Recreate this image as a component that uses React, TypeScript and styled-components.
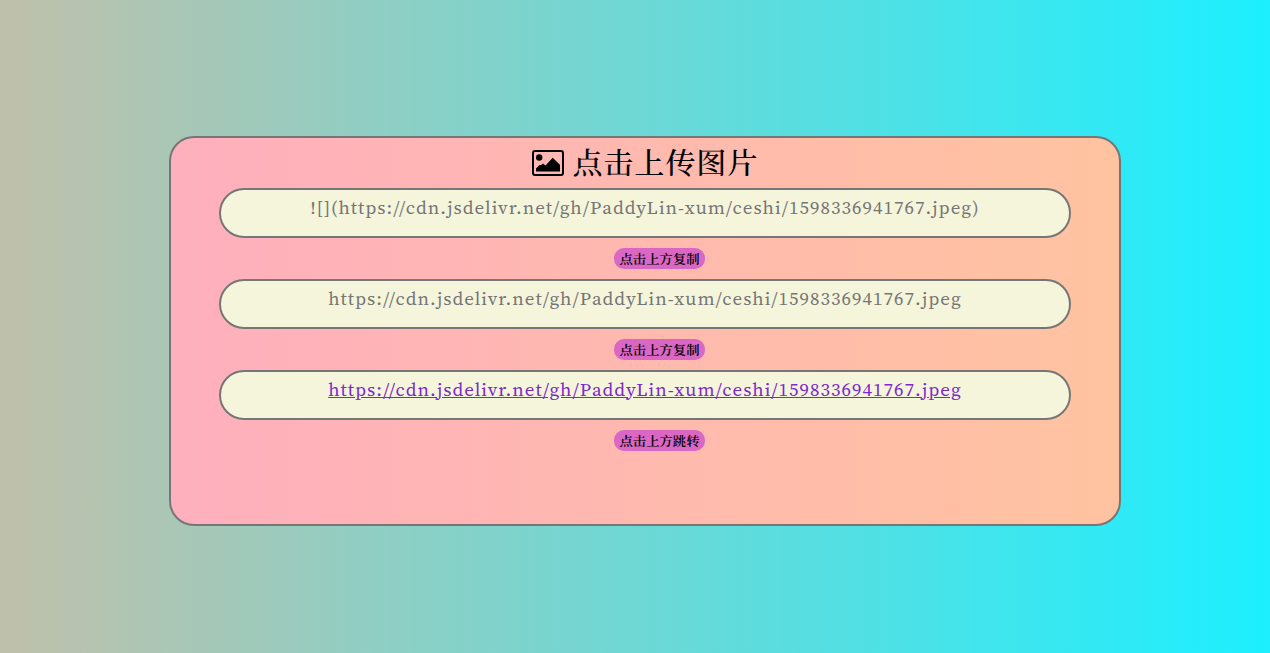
import React from "react";
import styled, { createGlobalStyle, css } from "styled-components";

const GlobalStyle = createGlobalStyle`
  * { box-sizing: border-box; }
  body {
    margin: 0;
    font-family: "Source Serif 4", "Noto Serif SC", "Noto Serif CJK SC", "Liberation Serif", "Noto Sans CJK SC", serif;
    font-weight: 425;
  }
`;

const Page = styled.main`
  display: flex;
  align-items: center;
  justify-content: center;
  min-height: 100vh;
  padding: 9px 0 0 20px;
  background: linear-gradient(to right, #c0c0aa, #1cefff);
`;

const Card = styled.section`
  display: flex;
  flex-direction: column;
  align-items: center;
  width: 75vw;
  min-height: 390px;
  padding: 0 48px;
  border: 2px solid #767676;
  border-radius: 25px;
  background: linear-gradient(to right, #ffafbd, #ffc3a0);
`;

const UploadButton = styled.button`
  display: flex;
  align-items: center;
  gap: 9px;
  height: 50px;
  padding: 0;
  border: 0;
  background: none;
  color: #000;
  font: inherit;
  font-weight: 500;
  font-size: 30px;
  letter-spacing: 1px;
  cursor: pointer;
`;

const UploadLabel = styled.span`
  padding-bottom: 4px;
`;

const Entry = styled.div`
  display: flex;
  flex-direction: column;
  align-items: center;
  width: 100%;
  height: 91px;
`;

const pill = css`
  display: block;
  width: 100%;
  height: 50px;
  padding: 4px 24px;
  border: 2px solid #767676;
  border-radius: 25px;
  background: #f5f5dc;
  color: #757575;
  font: inherit;
  font-size: 19px;
  line-height: 26px;
  letter-spacing: 1px;
  text-align: center;
`;

const LinkText = styled.textarea`
  ${pill}
  resize: none;
  overflow: hidden;
  outline: none;
`;

const LinkBox = styled.div`
  ${pill}
`;

const ImageLink = styled.a`
  color: #7d28d0;
`;

const Hint = styled.button`
  height: 21px;
  margin: 10px 0 0 29px;
  padding: 0 6px;
  border: 0;
  border-radius: 10px;
  background: #da67c3;
  color: #000;
  font-family: "Noto Serif SC", "Noto Serif CJK SC", "Noto Sans CJK SC", serif;
  font-weight: 600;
  line-height: 21px;
  cursor: pointer;
`;

const PictureIcon = () => (
  <svg width="32" height="26" viewBox="0 0 32 26" aria-hidden="true">
    <rect x="1" y="1" width="30" height="24" rx="2" fill="none" stroke="#000" strokeWidth="2" />
    <circle cx="7.2" cy="7.5" r="3.2" />
    <path d="M4 21.5v-3l3.500-3.500h1.500l2-1.500 2.500 2L20.700 7.800l7.300 7v6.700z" />
  </svg>
);

const url = "https://cdn.jsdelivr.net/gh/PaddyLin-xum/ceshi/1598336941767.jpeg";

export default function App() {
  return (
    <>
      <GlobalStyle />
      <Page>
        <Card>
          <UploadButton type="button">
            <PictureIcon />
            <UploadLabel>点击上传图片</UploadLabel>
          </UploadButton>
          <Entry>
            <LinkText readOnly aria-label="Markdown" value={`![](${url})`} />
            <Hint type="button">点击上方复制</Hint>
          </Entry>
          <Entry>
            <LinkText readOnly aria-label="URL" value={url} />
            <Hint type="button">点击上方复制</Hint>
          </Entry>
          <Entry>
            <LinkBox>
              <ImageLink href={url}>{url}</ImageLink>
            </LinkBox>
            <Hint type="button">点击上方跳转</Hint>
          </Entry>
        </Card>
      </Page>
    </>
  );
}
